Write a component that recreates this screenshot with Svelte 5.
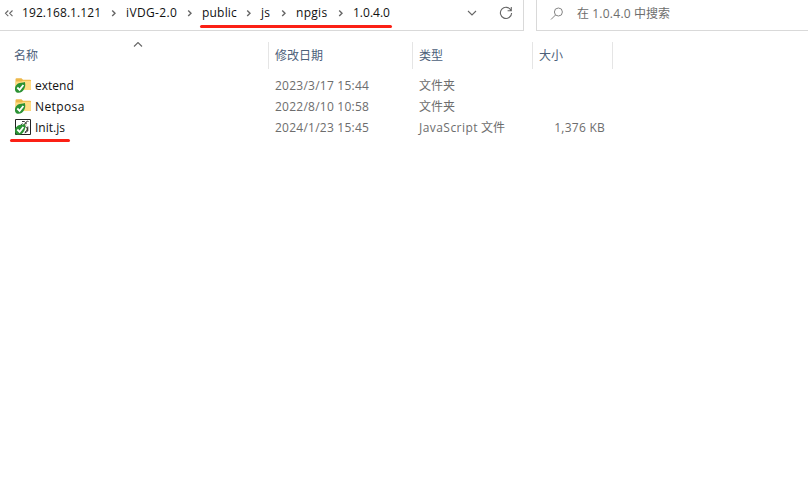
<script>
  const crumbs = ['192.168.1.121', 'iVDG-2.0', 'public', 'js', 'npgis', '1.0.4.0'];
  const files = [
    { name: 'extend', date: '2023/3/17 15:44', type: '文件夹', kind: '', size: '', folder: true },
    { name: 'Netposa', date: '2022/8/10 10:58', type: '文件夹', kind: '', size: '', folder: true },
    { name: 'Init.js', date: '2024/1/23 15:45', type: '文件', kind: 'JavaScript', size: '1,376 KB', folder: false }
  ];
</script>

<main>
  <header>
    <nav>
      <svg class="back" width="10" height="10" viewBox="0 0 10 10"><path d="M4.3 2.5 1.5 5.3l2.8 2.8M8.5 2.5 5.7 5.3l2.8 2.8" /></svg>
      <ol>
        {#each crumbs as crumb, i}
          <li class="c{i}"><span>{crumb}</span>
            {#if i < crumbs.length - 1}
              <svg width="6" height="8" viewBox="0 0 6 8"><path d="m1.2 1.4 2.8 2.8L1.2 7" /></svg>
            {/if}
          </li>
        {/each}
      </ol>
      <svg class="down" width="10" height="6" viewBox="0 0 10 6"><path d="m1 1 4 4 4-4" /></svg>
      <svg class="reload" width="14" height="14" viewBox="0 0 14 14"><path d="M12 4.4A5.6 5.6 0 1 0 12.6 7M12.3 1v3.7H8.6" /></svg>
      <i class="mark path-mark"></i>
    </nav>
    <div class="search">
      <svg width="14" height="14" viewBox="0 0 14 14"><circle cx="8.4" cy="5" r="4" /><path d="M5.5 8 1 12.5" /></svg>
      <span>在 <span class="term">1.0.4.0</span> 中搜索</span>
    </div>
  </header>

  <div class="row head">
    <div class="name">名称
      <svg class="sort" width="10" height="6" viewBox="0 0 10 6"><path d="m1 4.5 4-4 4 4" /></svg>
    </div>
    <div>修改日期</div>
    <div>类型</div>
    <div>大小</div>
  </div>

  <section>
    {#each files as file}
      <div class="row file">
        <div class="name">
          <svg width="17" height="17" viewBox="0 0 17 17">
            {#if file.folder}
              <path fill="#edb84a" d="M.5 2.2q0-1 1-1h5L8 2.7h7q1 0 1 1V13H.5z" />
              <path fill="#ffdc83" d="M.5 4.6h6L8 3.8h7q1 0 1 1V12q0 1-1 1H1.5q-1 0-1-1z" />
            {:else}
              <path fill="#fff" stroke="#222" d="M.5.5h15v15H.5z" />
              <path fill="#c9c9aa" d="m8.5 5 2.5-1 .8 2.5-2 1zM11 9l2-1v3.5l-2 1z" />
              <path fill="none" stroke="#222" stroke-width=".9" d="M7 2.5h2.5l1 1.2 2-1.7 1 1M12 4C8.2 4.5 8 6.8 10.8 8c2.6 1.2 2 3.5-1 5M7.5 4.5l-3 2.8M12.8 7.5v4.5l-3 2" />
            {/if}
            <path fill="#2b9234" d="M9.8 4.9c1.2 3.6.1 7.6-2.9 9.8-2.4 1.7-5.6 1.5-6.6-.8-1-2.5 0-5.7 2.7-7.5 2-1.2 4.6-.6 6.8-1.5z" />
            <path fill="none" stroke="#fff" stroke-width="1.8" d="m2.3 10.5 2.3 2.3L8.4 8" />
          </svg>
          <span class:wide={file.name === 'Netposa'}>{file.name}</span>
        </div>
        <div class="date">{file.date}</div>
        <div class="type">{#if file.kind}<span class="kind">{file.kind}</span>{' '}{/if}{file.type}</div>
        <div class="size">{file.size}</div>
      </div>
    {/each}
    <i class="mark file-mark"></i>
  </section>
</main>

<style>
  main {
    width: 808px;
    height: 494px;
    overflow: hidden;
    background: #fff;
    color: #6d6d6d;
    font: 12px/20px 'Open Sans', 'Noto Sans CJK SC', sans-serif;
    white-space: nowrap;
  }
  svg { display: block; flex: none; }
  header { display: flex; justify-content: space-between; height: 31px; }
  header svg, .sort { fill: none; stroke: #666; stroke-width: 1.1; }
  nav {
    position: relative;
    box-sizing: border-box;
    width: 524px;
    display: flex;
    align-items: center;
    padding: 0 11px 4px 4px;
    border: solid #d9d9d9;
    border-width: 0 1px 1px 0;
  }
  ol { display: flex; flex: 1; list-style: none; margin: 0 0 0 8px; padding: 0; color: #111; }
  li { display: flex; align-items: center; justify-content: space-between; }
  li svg { stroke-width: 1.4; }
  .c0, .c1, .c2, .c3, .c4 { box-sizing: border-box; padding-right: 9px; }
  .c0 { width: 104px; letter-spacing: .08px; }
  .c1 { width: 76px; letter-spacing: .35px; }
  .c2 { width: 59px; letter-spacing: .2px; }
  .c3 { width: 35px; letter-spacing: .3px; }
  .c4 { width: 57px; letter-spacing: .3px; }
  .down { margin-right: 22px; }
  .reload { margin-right: -1px; }
  .search {
    box-sizing: border-box;
    width: 272px;
    display: flex;
    align-items: center;
    gap: 13px;
    padding: 0 0 3px 13px;
    border: solid #d9d9d9;
    border-width: 0 0 1px 1px;
  }
  .search svg { stroke: #858585; stroke-width: 1; }
  .term { letter-spacing: .28px; }
  .mark { position: absolute; height: 3px; border-radius: 2px; background: #fb2015; }
  .path-mark { left: 200px; top: 25px; width: 192px; }
  .file-mark { left: 10px; top: 70px; width: 60px; }
  .row { display: grid; grid-template-columns: 269px 144px 120px 80px; }
  .row > div { box-sizing: border-box; padding-left: 6px; }
  .row > .name { padding-left: 14px; }
  .head { margin-top: 11px; height: 27px; line-height: 27px; color: #4c607a; }
  .head > div { border-right: 1px solid #e5e5e5; position: relative; }
  .sort { position: absolute; left: 133px; top: 0; }
  section { position: relative; padding-top: 6px; }
  .file { height: 21px; line-height: 21px; }
  .name { display: flex; align-items: center; gap: 3px; color: #111; }
  .file > .name { padding-left: 15px; }
  .head .name { color: inherit; }
  .wide { letter-spacing: .4px; }
  .date { letter-spacing: .24px; }
  .kind { letter-spacing: .45px; }
  .row > .size { text-align: right; padding-right: 8px; letter-spacing: .25px; }
</style>
